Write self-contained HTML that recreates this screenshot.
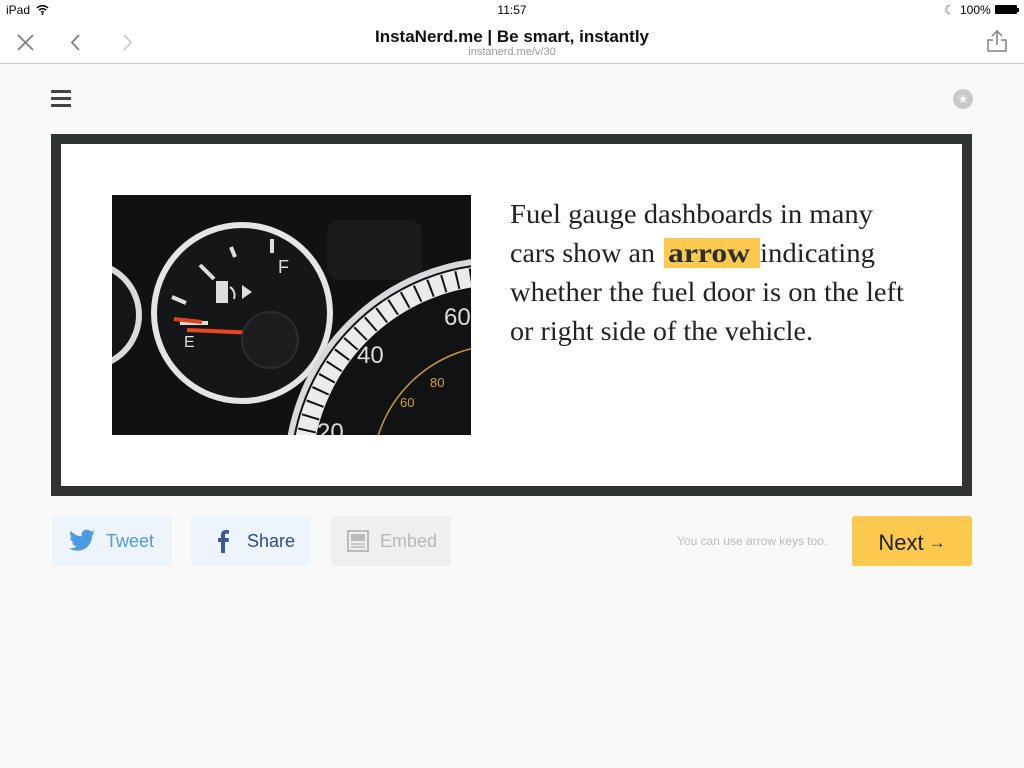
<!DOCTYPE html>
<html><head><meta charset="utf-8"><style>
*{margin:0;padding:0;box-sizing:border-box}
body{width:1024px;height:768px;background:#f9f9f9;font-family:"Liberation Sans",sans-serif;position:relative;overflow:hidden}
.abs{position:absolute}
.top{left:0;top:0;width:1024px;height:64px;background:#fff;border-bottom:1px solid #c8c8c8}
.btn{position:absolute;top:516px;height:50px;border-radius:3px;font-size:19px;display:flex;align-items:center}
</style></head><body>
<div class="abs top"></div>
<div class="abs" style="left:6px;top:3px;font-size:12px;color:#000">iPad</div>
<svg class="abs" style="left:36px;top:4px" width="13" height="11" viewBox="0 0 13 11"><path d="M1 4a8 8 0 0 1 11 0M3 6.2a5 5 0 0 1 7 0M5 8.3a2.2 2.2 0 0 1 3 0" stroke="#000" stroke-width="1.5" fill="none"/><circle cx="6.5" cy="10" r="1" fill="#000"/></svg>
<div class="abs" style="left:0;width:1024px;top:3px;text-align:center;font-size:12px">11:57</div>
<div class="abs" style="left:944px;top:3px;font-size:12px;color:#555">☾</div>
<div class="abs" style="left:960px;top:3px;font-size:12px">100%</div>
<div class="abs" style="left:995px;top:5px;width:22px;height:9px;background:#000;border-radius:1px"></div>
<div class="abs" style="left:1017px;top:8px;width:2px;height:4px;background:#000"></div>
<svg class="abs" style="left:14px;top:32px" width="140" height="20"><path d="M4 3l15 15M19 3L4 18" stroke="#7a8288" stroke-width="1.8"/><path d="M65 3l-7 7.5 7 7.5" stroke="#7a8288" stroke-width="1.8" fill="none"/><path d="M110 3l7 7.5-7 7.5" stroke="#c7ccd0" stroke-width="1.8" fill="none"/></svg>
<div class="abs" style="left:0;width:1024px;top:27px;text-align:center;font-size:17px;font-weight:bold;color:#111">InstaNerd.me | Be smart, instantly</div>
<div class="abs" style="left:0;width:1024px;top:46px;text-align:center;font-size:11px;color:#999">instanerd.me/v/30</div>
<svg class="abs" style="left:986px;top:29px" width="22" height="24"><path d="M11 2v14M6 7l5-5 5 5M7 11H2v11h18V11h-5" stroke="#7a8288" stroke-width="1.5" fill="none"/></svg>
<div class="abs" style="left:51px;top:90px;width:20px;height:2.5px;background:#444;box-shadow:0 7px 0 #444,0 14px 0 #444"></div>
<div class="abs" style="left:953px;top:89px;width:20px;height:20px;border-radius:50%;background:#c7c9cb;color:#fff;font-size:12px;text-align:center;line-height:20px">★</div>
<div class="abs" style="left:51px;top:134px;width:921px;height:362px;border:10px solid #2f3432;background:#fff"></div>
<svg class="abs" style="left:112px;top:195px" width="359" height="240" viewBox="0 0 359 240">
<rect width="359" height="240" fill="#101113"/>
<rect x="215" y="25" width="95" height="60" rx="12" fill="#1a1b1d"/>
<circle cx="-25" cy="120" r="52" fill="#141517" stroke="#d9dadb" stroke-width="6"/>
<circle cx="130" cy="118" r="88" fill="#151618" stroke="#e4e5e6" stroke-width="6"/>
<path d="M68 128h28M60 102l14 6M88 70l14 14M119 52l4 10M160 44v14" stroke="#ddd" stroke-width="4"/>
<path d="M62 124l28 3" stroke="#e0421e" stroke-width="4"/>
<path d="M75 135l70 3" stroke="#e8481f" stroke-width="4"/>
<circle cx="158" cy="145" r="28" fill="#1c1d1f" stroke="#2c2d2f" stroke-width="2"/>
<rect x="104" y="86" width="12" height="22" fill="#ddd"/><path d="M118 92q6 4 4 12" stroke="#ddd" stroke-width="2" fill="none"/><path d="M130 90l10 7-10 7z" fill="#ddd"/>
<text x="166" y="78" fill="#ddd" font-size="18" font-family="Liberation Sans">F</text>
<text x="72" y="152" fill="#ddd" font-size="16" font-family="Liberation Sans">E</text>
<circle cx="390" cy="280" r="215" fill="#111214" stroke="#d8d9da" stroke-width="6"/>
<circle cx="390" cy="280" r="200" fill="none" stroke="#e9ecea" stroke-width="20"/>
<circle cx="390" cy="280" r="200" fill="none" stroke="#111" stroke-width="18" stroke-dasharray="2 12"/>
<circle cx="390" cy="280" r="130" fill="none" stroke="#c89a2a" stroke-width="1.5"/>
<text x="245" y="168" fill="#ddd" font-size="24" font-family="Liberation Sans">40</text>
<text x="332" y="130" fill="#ddd" font-size="24" font-family="Liberation Sans">60</text>
<text x="318" y="192" fill="#d4a030" font-size="13" font-family="Liberation Sans">80</text>
<text x="288" y="212" fill="#d4a030" font-size="13" font-family="Liberation Sans">60</text>
<text x="205" y="245" fill="#ddd" font-size="24" font-family="Liberation Sans">20</text>
</svg>
<div class="abs" style="left:664px;top:238px;width:96px;height:30px;background:#fcc94e"></div>
<svg class="abs" style="left:500px;top:190px" width="430" height="170" font-family="Liberation Serif, serif" font-size="27" fill="#222">
<text x="10" y="33" textLength="363" lengthAdjust="spacingAndGlyphs">Fuel gauge dashboards in many</text>
<text x="10" y="72" textLength="145" lengthAdjust="spacingAndGlyphs">cars show an</text>
<text x="168" y="72" textLength="82" lengthAdjust="spacingAndGlyphs" font-weight="bold" fill="#2a2e2c">arrow</text>
<text x="260" y="72" textLength="115" lengthAdjust="spacingAndGlyphs">indicating</text>
<text x="10" y="111" textLength="394" lengthAdjust="spacingAndGlyphs">whether the fuel door is on the left</text>
<text x="10" y="150" textLength="303" lengthAdjust="spacingAndGlyphs">or right side of the vehicle.</text>
</svg>
<div class="btn" style="left:52px;width:120px;background:#eef4fb;color:#4a9be0;padding-left:16px;font-size:18px">
<svg width="28" height="24" viewBox="0 0 24 20"><path d="M23 2.5c-.8.4-1.7.6-2.6.7.9-.6 1.6-1.4 2-2.5-.9.5-1.9.9-2.9 1.1A4.5 4.5 0 0 0 11.8 6 12.9 12.9 0 0 1 2.4 1.3a4.5 4.5 0 0 0 1.4 6c-.7 0-1.4-.2-2-.6 0 2.2 1.6 4 3.6 4.5-.7.2-1.4.2-2 .1.6 1.8 2.2 3.1 4.2 3.1A9 9 0 0 1 1 16.3 12.8 12.8 0 0 0 7.9 18.3c8.3 0 12.8-6.9 12.8-12.8v-.6c.9-.6 1.6-1.4 2.3-2.4z" fill="#4a9be0"/></svg>
<span style="margin-left:10px">Tweet</span></div>
<div class="btn" style="left:191px;width:120px;background:#eef4fb;color:#2d4a86;padding-left:26px;font-size:18px">
<svg width="12" height="24" viewBox="0 0 12 24"><path d="M8 24V13h3.5l.5-4H8V6.5c0-1.1.3-1.9 1.9-1.9H12V1.1C11.6 1 10.4 1 9 1 6 1 4 2.8 4 6.1V9H1v4h3v11z" fill="#3b5998"/></svg>
<span style="margin-left:18px">Share</span></div>
<div class="btn" style="left:331px;width:120px;background:#efefef;color:#b8b8b8;padding-left:16px;font-size:18px">
<svg width="22" height="22"><rect x="1" y="1" width="20" height="20" fill="none" stroke="#bbb" stroke-width="2"/><rect x="4" y="4" width="14" height="7" fill="#bbb"/><path d="M4 14h14M4 17h14" stroke="#bbb" stroke-width="1.5"/></svg>
<span style="margin-left:11px">Embed</span></div>
<div class="abs" style="left:677px;top:534px;font-size:12px;color:#bbb">You can use arrow keys too.</div>
<div class="btn" style="left:852px;width:120px;background:#fcc94e;color:#222;font-size:22px;justify-content:center;padding-top:3px">Next <span style="font-size:17px;margin-left:5px">→</span></div>
</body></html>
